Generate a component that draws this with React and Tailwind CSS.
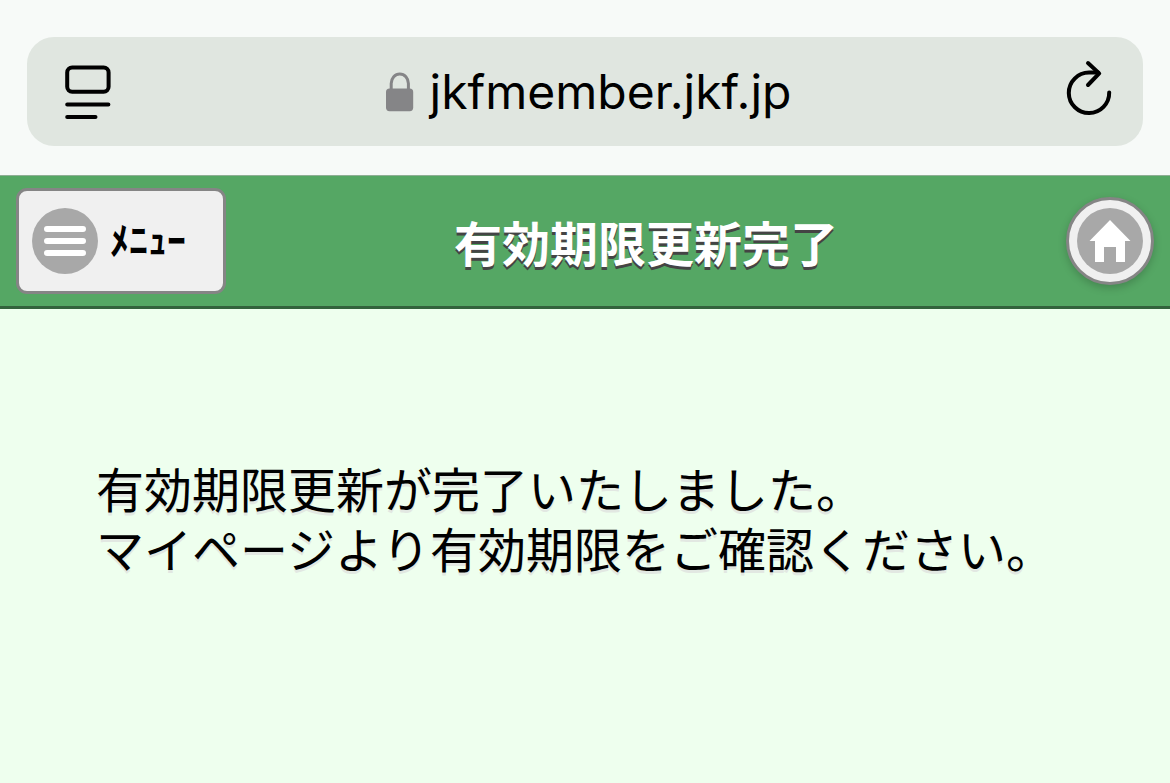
import React from 'react'

const PageIcon = () => (
    <svg viewBox="0 0 46 54" className="w-[46px] h-[54px]" fill="none" stroke="black" strokeWidth="4" strokeLinecap="round" aria-hidden="true">
        <rect x="2.2" y="2.4" width="41.4" height="24.4" rx="5" />
        <path d="M2.2 39.4H43.4M2.2 52H30.5" />
    </svg>
)

const LockIcon = () => (
    <svg viewBox="0 0 28 40" className="w-7 h-10" aria-hidden="true">
        <path d="M5.2 18V11.5a8.6 9.6 0 0 1 17.2 0V18" fill="none" stroke="#858587" strokeWidth="3" />
        <rect x="0" y="16.4" width="27.2" height="22.8" rx="3.6" fill="#858587" />
    </svg>
)

const ReloadIcon = () => (
    <svg viewBox="0 0 46 60" className="w-[46px] h-[60px]" fill="none" stroke="black" strokeWidth="4" strokeLinecap="round" strokeLinejoin="round" aria-hidden="true">
        <path d="M43.2 32.4A20.2 20.2 0 1 1 23 12.6H32" />
        <path d="M22 3L33.2 13.4L22 25" />
    </svg>
)

const HomeIcon = () => (
    <svg viewBox="0 0 66 66" className="w-[66px] h-[66px]" aria-hidden="true">
        <circle cx="33" cy="33" r="33" fill="#a8a8a8" />
        <path d="M33 12L53.5 33H48V54H39V39H27V54H18V33H12.5Z" fill="white" />
    </svg>
)

const MenuIcon = () => (
    <svg viewBox="0 0 66 66" className="w-[66px] h-[66px] shrink-0" aria-hidden="true">
        <circle cx="33" cy="33" r="33" fill="#a8a8a8" />
        <path d="M15 21H51M15 33H51M15 45H51" stroke="white" strokeWidth="6" strokeLinecap="round" />
    </svg>
)

const AddressBar = () => (
    <div className="bg-[#f7faf8] px-[27px] pt-[37px] pb-[29px]">
        <div className="h-[109px] rounded-[27px] bg-[#e0e6e0] flex items-center justify-between pl-[38px] pr-[31px]">
            <button type="button" aria-label="ページ設定">
                <PageIcon />
            </button>
            <div className="flex items-center gap-4 font-['Inter',sans-serif] text-5xl leading-[60px] text-black">
                <LockIcon />
                <span>jkfmember.jkf.jp</span>
            </div>
            <button type="button" aria-label="再読み込み" className="pb-1">
                <ReloadIcon />
            </button>
        </div>
    </div>
)

const Header = () => (
    <header className="bg-[#55a764] border-t border-t-[#8fae95] border-b-3 border-b-[#33623c] px-4 py-3 flex items-center justify-between">
        <button type="button" className="w-[210px] h-[106px] rounded-[11px] border-3 border-[#858585] bg-[#f0f0f0] pl-[13px] flex items-center gap-3 text-[38px] font-bold text-black">
            <MenuIcon />
            <span className="pb-2">ﾒﾆｭｰ</span>
        </button>
        <h1 className="text-5xl font-bold text-white [text-shadow:0_3px_0_#444]">有効期限更新完了</h1>
        <a href="#" aria-label="ホーム" className="w-[88px] h-[88px] rounded-full border-3 border-[#858585] bg-[#f0f0f0] flex items-center justify-center shadow-[0_3px_9px_rgba(0,0,0,0.2)]">
            <HomeIcon />
        </a>
    </header>
)

const App = () => {
    return (
        <div className="min-h-screen bg-[#eeffee] font-['Noto_Sans_CJK_JP',sans-serif]">
            <AddressBar />
            <Header />
            <main className="px-24 py-[148px]">
                <p className="text-5xl leading-[60px] text-black [text-shadow:0_3px_0_#e2e8e2]">
                    有効期限更新が完了いたしました。
                    <br />
                    マイページより有効期限をご確認ください。
                </p>
            </main>
        </div>
    )
}

export default App
